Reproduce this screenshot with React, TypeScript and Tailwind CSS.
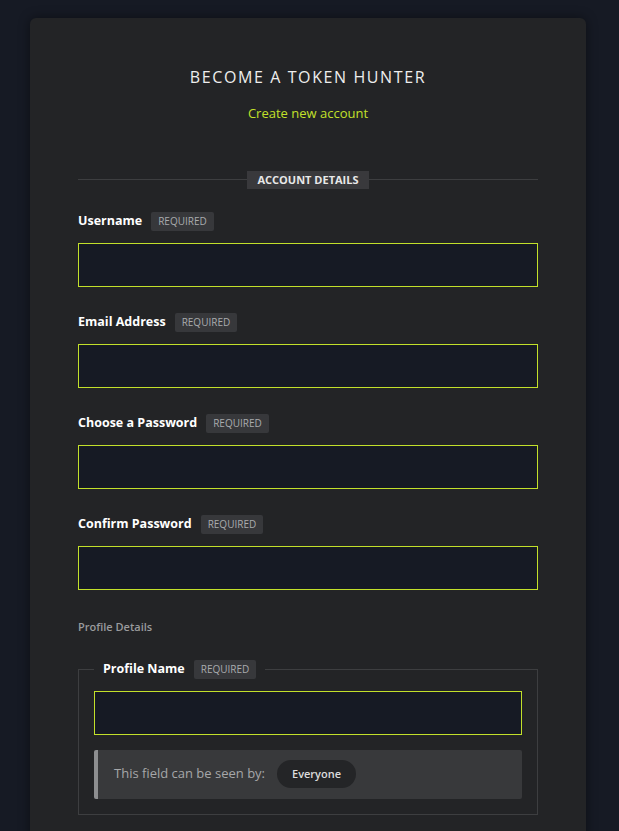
import React from "react"

const font = { fontFamily: '"Open Sans", "Noto Sans", sans-serif' }

function Required() {
  return (
    <span className="ml-[9px] inline-flex h-[19px] items-center rounded-[2px] bg-[#37383b] px-[7px] text-[10px] font-normal uppercase text-[#a9abad]">
      Required
    </span>
  )
}

function Field({ label }: { label: string }) {
  return (
    <div className="mb-[26px]">
      <div className="flex h-[19px] items-center">
        <span className="text-[12.5px] font-bold text-white">{label}</span>
        <Required />
      </div>
      <input className="mt-[12px] block h-[44px] w-full border border-[#c2e02a] bg-[#161a24] outline-none" />
    </div>
  )
}

export default function App() {
  return (
    <div style={font} className="min-h-[831px] bg-[#161a24] pl-[30px] pr-[33px] pt-[18px]">
      <div className="min-h-[820px] rounded-t-[6px] bg-[#232426] px-[48px] pt-[47px] shadow-[0_0_12px_rgba(0,0,0,0.45)]">
        <h1 className="text-center text-[16px] font-normal tracking-[0.1em] text-[#eeeeee]">
          BECOME A TOKEN HUNTER
        </h1>
        <p className="mt-[15px] text-center text-[13px] text-[#c2e02a]">Create new account</p>

        {/* Section divider */}
        <div className="mt-[47px] flex items-center">
          <div className="h-px flex-1 bg-[#3d3e40]" />
          <span className="bg-[#39393c] px-[10px] py-px text-[11px] font-bold text-[#e8e8e8]">ACCOUNT DETAILS</span>
          <div className="h-px flex-1 bg-[#3d3e40]" />
        </div>

        <div className="mt-[23px]">
          <Field label="Username" />
          <Field label="Email Address" />
          <Field label="Choose a Password" />
          <Field label="Confirm Password" />
        </div>

        <p className="mt-[29px] text-[11px] font-semibold text-[#9a9b9d]">Profile Details</p>

        <fieldset className="mt-[24px] border border-[#3d3e40] px-[15px] pb-[15px]">
          <legend className="flex h-[19px] items-center px-[9px]">
            <span className="text-[12.5px] font-bold text-white">Profile Name</span>
            <Required />
          </legend>
          <input className="mt-[12px] block h-[44px] w-full border border-[#c2e02a] bg-[#161a24] outline-none" />
          <div className="mt-[15px] flex h-[49px] items-center rounded-[2px] border-l-4 border-[#8d8e90] bg-[#38393b] pl-[16px]">
            <span className="text-[13px] text-[#a6a7a9]">This field can be seen by:</span>
            <span className="ml-[12px] inline-flex h-[28px] items-center rounded-full bg-[#242527] px-[15px] text-[11px] font-semibold text-[#dcdcdc]">
              Everyone
            </span>
          </div>
        </fieldset>
      </div>
    </div>
  )
}
